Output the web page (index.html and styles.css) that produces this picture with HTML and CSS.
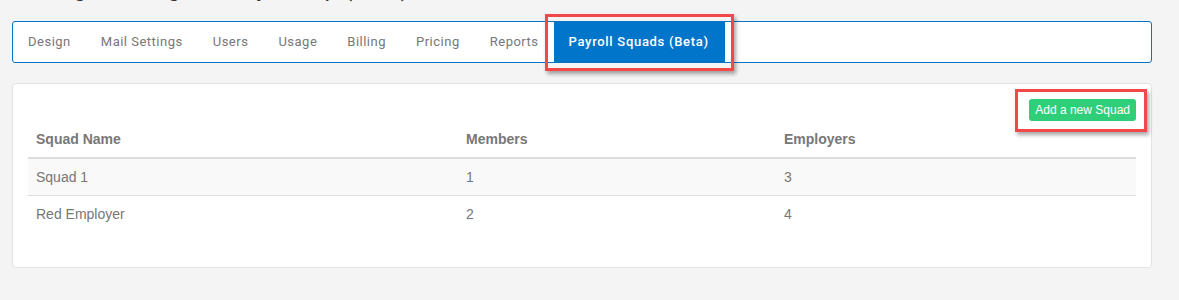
FILE: index.html
```html
<!DOCTYPE html>
<html lang="en">
<head>
    <meta charset="UTF-8">
    <meta name="viewport" content="width=device-width, initial-scale=1.0">
    <title>Payroll Squads</title>
    <link rel="stylesheet" href="styles.css">
</head>
<body>
    <div class="page">
        <div class="title-bar">
            <h1 class="page-title">Manage Settings for My Group (Beta)</h1>
        </div>

        <nav class="tabs">
            <a class="tab" href="#">Design</a>
            <a class="tab" href="#">Mail Settings</a>
            <a class="tab" href="#">Users</a>
            <a class="tab" href="#">Usage</a>
            <a class="tab" href="#">Billing</a>
            <a class="tab" href="#">Pricing</a>
            <a class="tab" href="#">Reports</a>
            <a class="tab tab-active" href="#">Payroll Squads (Beta)<span class="mark mark-tab"></span></a>
        </nav>

        <div class="card">
            <div class="toolbar">
                <span class="btn-wrap">
                    <button class="btn-add">Add a new Squad</button>
                    <span class="mark mark-btn"></span>
                </span>
            </div>
            <table class="squads">
                <thead>
                    <tr>
                        <th class="col-name">Squad Name</th>
                        <th class="col-members">Members</th>
                        <th>Employers</th>
                    </tr>
                </thead>
                <tbody>
                    <tr class="striped">
                        <td>Squad 1</td>
                        <td>1</td>
                        <td>3</td>
                    </tr>
                    <tr>
                        <td>Red Employer</td>
                        <td>2</td>
                        <td>4</td>
                    </tr>
                </tbody>
            </table>
        </div>
    </div>
</body>
</html>
```

FILE: styles.css
```css
body {
    margin: 0;
    background-color: #f4f4f4;
    font-family: "Liberation Sans", Arial, sans-serif;
    color: #777;
}
.page {
    padding: 0 27px 0 12px;
}
/* o título fica cortado no topo da captura */
.title-bar {
    height: 21px;
    overflow: hidden;
}
.page-title {
    margin: -27px 0 0 1px;
    font-family: Roboto, "Liberation Sans", sans-serif;
    font-size: 24px;
    line-height: 30px;
    font-weight: 400;
    color: #333;
}
/* barra de abas */
.tabs {
    display: flex;
    height: 40px;
    background-color: #fff;
    border: 1px solid #0a74c4;
    border-radius: 3px;
}
.tab {
    position: relative;
    display: block;
    padding: 0 15px;
    line-height: 40px;
    font-family: Roboto, "Liberation Sans", sans-serif;
    font-size: 13px;
    letter-spacing: 0.5px;
    color: #777;
    text-decoration: none;
}
.tab-active {
    padding: 0 16px 0 15px;
    background-color: #0075c9;
    color: #fff;
    font-weight: 500;
    letter-spacing: 0.7px;
}
/* marcações vermelhas da captura */
.mark {
    position: absolute;
    border: 3px solid #f2484a;
    box-shadow: 2px 3px 4px rgba(0, 0, 0, 0.35);
    pointer-events: none;
}
.mark-tab {
    left: -9px;
    right: -9px;
    top: -8px;
    bottom: -9px;
}
.mark-btn {
    left: -14px;
    right: -11px;
    top: -10px;
    bottom: -11px;
}
.card {
    margin-top: 20px;
    padding: 15px 15px 15px;
    background-color: #fff;
    border: 1px solid #e2e2e2;
    border-radius: 4px;
}
.toolbar {
    display: flex;
    justify-content: flex-end;
}
.btn-wrap {
    position: relative;
    display: block;
}
.btn-add {
    display: block;
    height: 22px;
    padding: 0 6px;
    border: 0;
    border-radius: 3px;
    background-color: #2ecf78;
    color: #fff;
    font-family: "Liberation Sans", Arial, sans-serif;
    font-size: 12px;
    line-height: 22px;
}
.squads {
    width: 100%;
    margin-bottom: 20px;
    border-collapse: collapse;
    font-size: 14px;
    line-height: 20px;
}
.squads th,
.squads td {
    padding: 8px;
    text-align: left;
}
.squads th {
    font-weight: bold;
    color: #777;
    border-bottom: 2px solid #ddd;
}
.squads td {
    border-top: 1px solid #ddd;
    color: #777;
}
.squads tbody tr:first-child td {
    border-top: 0;
}
.col-name {
    width: 414px;
}
.col-members {
    width: 302px;
}
.striped {
    background-color: #f9f9f9;
}
```
